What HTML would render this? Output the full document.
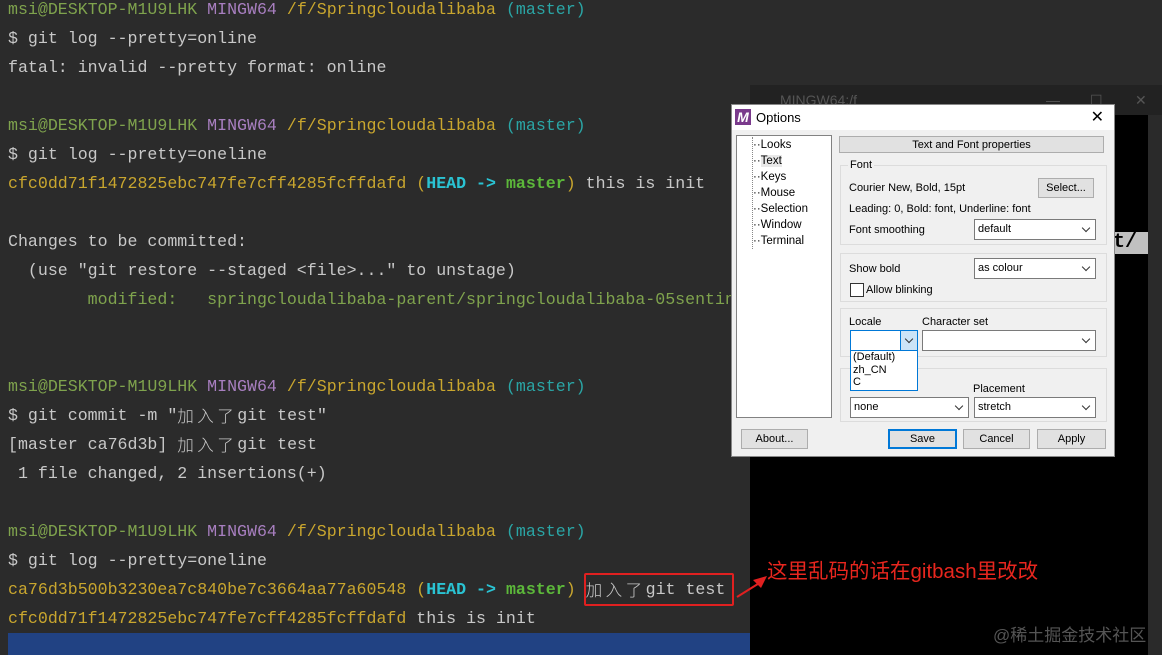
<!DOCTYPE html>
<html><head><meta charset="utf-8"><style>
body{margin:0;width:1162px;height:655px;overflow:hidden;background:#2b2b2b;position:relative;font-family:"Liberation Mono","Noto Sans CJK SC",monospace}
.term{position:absolute;left:0;top:0;width:750px;height:655px;background:#2b2b2b;overflow:hidden}
.ln{position:absolute;left:8px;font-size:16.6px;line-height:20px;height:20px;white-space:pre;color:#c8c8c8}
.k{letter-spacing:3.4px;font-family:"Noto Sans CJK SC",sans-serif;font-weight:300;display:inline-block;vertical-align:top;line-height:20px;height:20px;position:relative;top:-1px}
.g{color:#7fa34d}.p{color:#a87fc0}.y{color:#c9a62e}.c{color:#2aa5a5}.cy{color:#2ac3d3;font-weight:bold}.gr{color:#5cb83a;font-weight:bold}.mg{color:#7fa34d}
.ui{font-family:"Liberation Sans",sans-serif;font-size:11px;color:#000;position:absolute}
.box{position:absolute;border:1px solid #dcdcdc}
.btn{position:absolute;background:#e1e1e1;border:1px solid #adadad;text-align:center;font-family:"Liberation Sans",sans-serif;font-size:11px;line-height:18px}
.sel{position:absolute;background:#fff;border:1px solid #7a7a7a;font-family:"Liberation Sans",sans-serif;font-size:11px;line-height:18px;padding-left:3px;box-sizing:border-box}
.sel:after{content:"";position:absolute;right:6px;top:5px;width:5px;height:5px;border-right:1px solid #333;border-bottom:1px solid #333;transform:rotate(45deg)}
</style></head><body>
<div class="term">
<div class="ln" style="top:0"><span class="g">msi@DESKTOP-M1U9LHK</span> <span class="p">MINGW64</span> <span class="y">/f/Springcloudalibaba</span> <span class="c">(master)</span></div>
<div class="ln" style="top:29px">$ git log --pretty=online</div>
<div class="ln" style="top:58px">fatal: invalid --pretty format: online</div>
<div class="ln" style="top:116px"><span class="g">msi@DESKTOP-M1U9LHK</span> <span class="p">MINGW64</span> <span class="y">/f/Springcloudalibaba</span> <span class="c">(master)</span></div>
<div class="ln" style="top:145px">$ git log --pretty=oneline</div>
<div class="ln" style="top:174px"><span class="y">cfc0dd71f1472825ebc747fe7cff4285fcffdafd</span> <span class="y">(</span><span class="cy">HEAD -&gt; </span><span class="gr">master</span><span class="y">)</span> this is init</div>
<div class="ln" style="top:232px">Changes to be committed:</div>
<div class="ln" style="top:261px">  (use "git restore --staged &lt;file&gt;..." to unstage)</div>
<div class="ln" style="top:290px"><span class="mg">        modified:   springcloudalibaba-parent/springcloudalibaba-05sentinel</span></div>
<div class="ln" style="top:377px"><span class="g">msi@DESKTOP-M1U9LHK</span> <span class="p">MINGW64</span> <span class="y">/f/Springcloudalibaba</span> <span class="c">(master)</span></div>
<div class="ln" style="top:406px">$ git commit -m "<span class="k">加入了</span>git test"</div>
<div class="ln" style="top:435px">[master ca76d3b] <span class="k">加入了</span>git test</div>
<div class="ln" style="top:464px"> 1 file changed, 2 insertions(+)</div>
<div class="ln" style="top:522px"><span class="g">msi@DESKTOP-M1U9LHK</span> <span class="p">MINGW64</span> <span class="y">/f/Springcloudalibaba</span> <span class="c">(master)</span></div>
<div class="ln" style="top:551px">$ git log --pretty=oneline</div>
<div class="ln" style="top:580px"><span class="y">ca76d3b500b3230ea7c840be7c3664aa77a60548</span> <span class="y">(</span><span class="cy">HEAD -&gt; </span><span class="gr">master</span><span class="y">)</span> <span class="k">加入了</span>git test</div>
<div class="ln" style="top:609px"><span class="y">cfc0dd71f1472825ebc747fe7cff4285fcffdafd</span> this is init</div>
<div style="position:absolute;left:584px;top:573px;width:146px;height:29px;border:2px solid #e02020;border-radius:2px"></div>
<div style="position:absolute;left:8px;top:633px;width:742px;height:22px;background:#214283"></div>
</div>
<!-- right terminal -->
<div style="position:absolute;left:750px;top:85px;width:398px;height:570px;background:#000"></div>
<div style="position:absolute;left:750px;top:85px;width:412px;height:30px;background:#222;color:#555;font-family:'Liberation Sans',sans-serif;font-size:14px;line-height:30px"><span style="margin-left:30px">MINGW64:/f</span><span style="position:absolute;left:296px">—</span><span style="position:absolute;left:340px">☐</span><span style="position:absolute;left:385px">✕</span></div>
<div style="position:absolute;left:1148px;top:115px;width:14px;height:540px;background:#2a2a2a"></div>
<div style="position:absolute;left:1115px;top:232px;width:33px;height:22px;background:#c0c0c0;color:#000;font-family:'Liberation Mono',monospace;font-weight:bold;font-size:20px;line-height:22px;overflow:hidden;white-space:nowrap;text-indent:-14px">ct/</div>
<!-- arrow & annotation -->
<svg style="position:absolute;left:735px;top:570px" width="35" height="30"><line x1="2" y1="27" x2="26" y2="12" stroke="#e02020" stroke-width="2"/><polygon points="32,6 18,10 26,18" fill="#e02020"/></svg>
<div style="position:absolute;left:767px;top:554px;color:#e8261e;font-family:'Liberation Sans','Noto Sans CJK SC',sans-serif;font-size:20.5px">这里乱码的话在gitbash里改改</div>
<div style="position:absolute;left:993px;top:621px;color:#555;font-family:'Liberation Sans','Noto Sans CJK SC',sans-serif;font-size:17px">@稀土掘金技术社区</div>
<!-- dialog -->
<div style="position:absolute;left:731px;top:104px;width:384px;height:353px;background:#f0f0f0;border:1px solid #888;box-sizing:border-box">
<div style="height:25px;background:#fff;position:relative"><div style="position:absolute;left:3px;top:4px;width:16px;height:16px;background:#7a3a8c;color:#fff;font:bold italic 14px/16px 'Liberation Sans';text-align:center">M</div><span class="ui" style="left:24px;top:5px;font-size:13px">Options</span><span class="ui" style="right:10px;top:2px;font-size:16px">✕</span></div>
</div>
<div style="position:absolute;left:736px;top:135px;width:96px;height:283px;background:#fff;border:1px solid #828282;box-sizing:border-box"></div>
<div class="ui" style="left:752px;top:137px;line-height:16px;border-left:1px dotted #888;font-size:11.5px">
<div>··Looks</div><div>··<span style="background:#e8e8e8">Text</span></div><div>··Keys</div><div>··Mouse</div><div>··Selection</div><div>··Window</div><div>··Terminal</div></div>
<div class="btn" style="left:839px;top:136px;width:265px;height:17px;line-height:17px;box-sizing:border-box">Text and Font properties</div>
<div class="box" style="left:840px;top:165px;width:265px;height:78px"></div>
<span class="ui" style="left:848px;top:159px;background:#f0f0f0;padding:0 2px">Font</span>
<span class="ui" style="left:849px;top:182px">Courier New, Bold, 15pt</span>
<div class="btn" style="left:1038px;top:178px;width:56px;height:20px;box-sizing:border-box">Select...</div>
<span class="ui" style="left:849px;top:203px">Leading: 0, Bold: font, Underline: font</span>
<span class="ui" style="left:849px;top:224px">Font smoothing</span>
<div class="sel" style="left:974px;top:219px;width:122px;height:21px">default</div>
<div class="box" style="left:840px;top:253px;width:265px;height:47px"></div>
<span class="ui" style="left:849px;top:263px">Show bold</span>
<div class="sel" style="left:974px;top:258px;width:122px;height:21px">as colour</div>
<div style="position:absolute;left:850px;top:283px;width:12px;height:12px;border:1px solid #333;background:#fff"></div>
<span class="ui" style="left:866px;top:284px">Allow blinking</span>
<div class="box" style="left:840px;top:308px;width:265px;height:47px"></div>
<span class="ui" style="left:849px;top:316px">Locale</span>
<span class="ui" style="left:922px;top:316px">Character set</span>
<div class="sel" style="left:922px;top:330px;width:174px;height:21px"></div>
<div style="position:absolute;left:850px;top:330px;width:68px;height:21px;background:#fff;border:1px solid #0078d7;box-sizing:border-box"><div style="position:absolute;right:0;top:0;width:16px;height:19px;background:#cce4f7;border-left:1px solid #0078d7"><div style="position:absolute;left:5px;top:5px;width:5px;height:5px;border-right:1px solid #333;border-bottom:1px solid #333;transform:rotate(45deg)"></div></div></div>
<div class="box" style="left:840px;top:368px;width:265px;height:52px"></div>
<span class="ui" style="left:973px;top:383px">Placement</span>
<div class="sel" style="left:850px;top:397px;width:119px;height:21px">none</div>
<div class="sel" style="left:974px;top:397px;width:122px;height:21px">stretch</div>
<div style="position:absolute;left:850px;top:350px;width:68px;height:41px;background:#fff;border:1px solid #0078d7;box-sizing:border-box;font:11px/12.5px 'Liberation Sans';padding-left:2px">(Default)<br>zh_CN<br>C</div>
<div class="btn" style="left:741px;top:429px;width:67px;height:20px;box-sizing:border-box">About...</div>
<div class="btn" style="left:888px;top:429px;width:69px;height:20px;box-sizing:border-box;border:2px solid #0078d7;line-height:16px">Save</div>
<div class="btn" style="left:963px;top:429px;width:67px;height:20px;box-sizing:border-box">Cancel</div>
<div class="btn" style="left:1037px;top:429px;width:69px;height:20px;box-sizing:border-box">Apply</div>
</body></html>
